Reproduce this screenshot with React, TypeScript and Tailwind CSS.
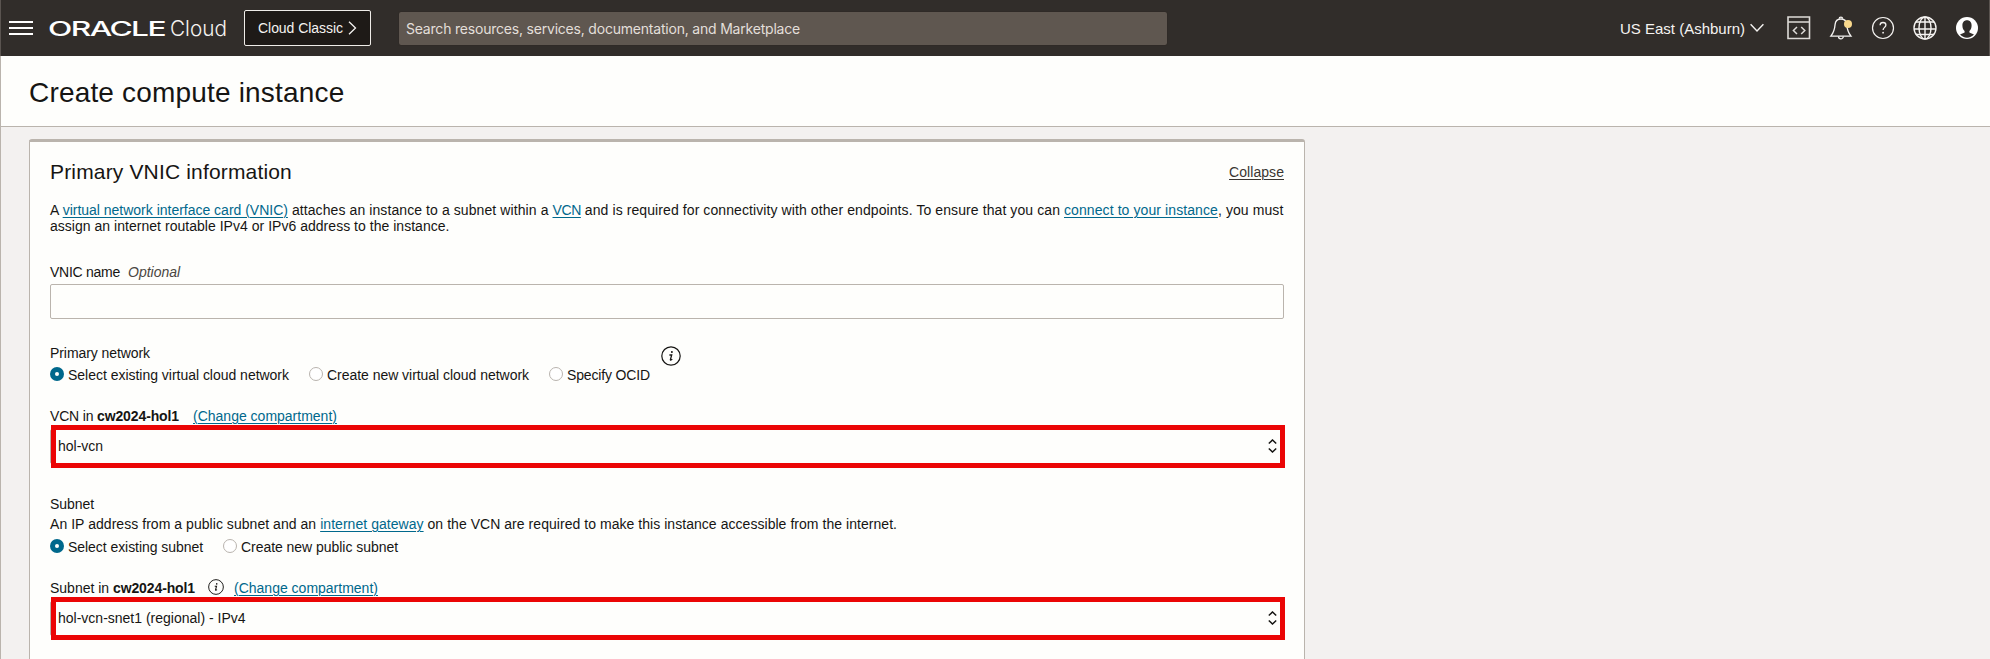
import type { ReactNode } from "react";

function CodeIcon() {
  return (
    <svg width="24" height="24" viewBox="0 0 24 24" fill="none" stroke="#dedbd8">
      <path d="M1 1h21.500v21.500H1zM1 6h21.500" strokeWidth="1.6" />
      <path d="M10 11l-3.600 3.500 3.600 3.500M14.200 11l3.600 3.500-3.600 3.500" strokeWidth="1.5" />
    </svg>
  );
}

function BellIcon() {
  return (
    <svg width="24" height="26" viewBox="0 0 24 26" fill="none" stroke="#f5f3f1" strokeWidth="1.3">
      <path d="M1.800 21.200h20.200c-3.200-4-3.900-6.600-4.300-11.800C17.400 5.600 15 4 11.900 4S6.400 5.600 6.100 9.400C5.700 14.600 5 17.200 1.800 21.200z" />
      <path d="M10.200 3.800a1.700 1.700 0 1 1 3.400 0M9.500 21.400a2.400 2.400 0 0 0 4.800 0" />
      <circle cx="19" cy="9" r="4" fill="#f9d88c" stroke="none" />
    </svg>
  );
}

function HelpIcon() {
  return (
    <svg width="24" height="24" viewBox="0 0 24 24" fill="none" stroke="#f5f3f1" strokeWidth="1.2">
      <circle cx="12" cy="12" r="10.5" />
      <path d="M9.100 9.300c0-1.700 1.200-2.800 2.900-2.800s2.900 1.100 2.900 2.600c0 2.300-2.800 2.300-2.800 5" strokeWidth="1.300" />
      <circle cx="12.100" cy="16.700" r=".9" fill="#f5f3f1" stroke="none" />
    </svg>
  );
}

function GlobeIcon() {
  return (
    <svg width="24" height="24" viewBox="0 0 24 24" fill="none" stroke="#f5f3f1" strokeWidth="1.4">
      <circle cx="12" cy="12" r="11" />
      <ellipse cx="12" cy="12" rx="6" ry="11" />
      <path d="M12 1v22M1 13h22M3 6h18M3 18.500h18" />
    </svg>
  );
}

function UserIcon() {
  return (
    <svg width="24" height="24" viewBox="0 0 24 24">
      <circle cx="12" cy="12" r="11" fill="#fff" />
      <path d="M12 4.300c3 0 4.600 2.200 4.600 5.200 0 2.300-.8 4.300-2.200 5.400v1.500c1.200.7 3.300 1 4.600 2.200-1.800 2-4.300 3.200-7 3.200s-5.200-1.200-7-3.200c1.300-1.200 3.400-1.500 4.600-2.200v-1.500C8.200 13.800 7.400 11.800 7.400 9.500c0-3 1.600-5.200 4.600-5.200z" fill="#312d2a" />
    </svg>
  );
}

function InfoIcon({ size }: { size: number }) {
  return (
    <svg width={size} height={size} viewBox="0 0 20 20" fill="none" stroke="#161513">
      <circle cx="10" cy="10" r="9.200" strokeWidth="1.200" />
      <circle cx="10.900" cy="6.100" r="1" fill="#161513" stroke="none" />
      <path d="M8.400 9h2.300l-1.300 4.600c-.1.700.6.600 1.900-.3" strokeWidth="1.300" />
    </svg>
  );
}

function Link({ children, className = "" }: { children: ReactNode; className?: string }) {
  return (
    <a href="#" className={`text-[#00688c] underline decoration-1 underline-offset-2 ${className}`}>
      {children}
    </a>
  );
}

function Radio({ checked = false, children }: { checked?: boolean; children: ReactNode }) {
  return (
    <label className="flex h-4 items-start gap-1">
      {checked ? (
        <span className="flex size-[14px] items-center justify-center rounded-full bg-[#00688c]">
          <span className="size-1 rounded-full bg-[#fefefc]" />
        </span>
      ) : (
        <span className="size-[14px] rounded-full border border-[#b9b4ae] bg-white" />
      )}
      <span>{children}</span>
    </label>
  );
}

function SelectBox({ value }: { value: string }) {
  return (
    <div className="relative mt-[5px] flex h-[35px] items-center justify-between rounded-xs border border-[#bab4ad] pr-[6px] pb-px pl-[7px]">
      <span>{value}</span>
      <svg width="9" height="14" viewBox="0 0 9 14" fill="none" stroke="#161513" strokeWidth="1.500">
        <path d="M.8 4.500L4.500 1l3.700 3.500M.8 9.500L4.500 13l3.700-3.500" />
      </svg>
      <div className="absolute -top-[5px] left-0 h-[43px] w-[1234px] border-[5px] border-[#eb0505]" />
    </div>
  );
}

export default function App() {
  return (
    <div className="flex h-[659px] w-[1990px] flex-col overflow-hidden bg-[#f3f1f0] font-['Liberation_Sans',Arial,sans-serif] text-[14px] leading-4 text-[#161513]">
      <header className="flex h-14 shrink-0 items-center border-x border-[#5a5450] bg-[#312d2a] text-[#f5f3f1]">
        <button className="ml-2 flex h-[14px] w-6 flex-col justify-between">
          <span className="h-[2px] w-full bg-white" />
          <span className="h-[2px] w-full bg-white" />
          <span className="h-[2px] w-full bg-white" />
        </button>
        <svg width="180" height="30" viewBox="0 0 180 30" className="ml-4">
          <text x="-1" y="22.500" textLength="117" lengthAdjust="spacingAndGlyphs" letterSpacing="-1" fontSize="20" fontWeight="500" fill="#fff" className="font-['Inter',sans-serif]">
            ORACLE
          </text>
          <text x="121" y="22.500" textLength="57" lengthAdjust="spacingAndGlyphs" fontSize="21.500" fontWeight="300" fill="#f5f3f1" className="font-['Inter',sans-serif]">
            Cloud
          </text>
        </svg>
        <button className="ml-[15px] flex h-9 w-[127px] items-center rounded-xs border border-[#efece8] bg-[#1e1a17] pl-[13px] tracking-[-0.046px] text-[#f5f3f1]">
          Cloud Classic
          <svg width="9" height="14" viewBox="0 0 9 14" fill="none" stroke="#f5f3f1" strokeWidth="1.300" className="ml-[5px]">
            <path d="M1 .7L7.500 7 1 13.300" />
          </svg>
        </button>
        <div className="ml-7 flex h-[33px] w-[768px] items-center rounded-xs bg-[#5f5750] pt-px pl-[7px] font-['Inter',sans-serif] tracking-[-0.204px] text-[#e3dfda] shadow-[0_0_1px_#1e1a17]">
          Search resources, services, documentation, and Marketplace
        </div>
        <div className="ml-auto flex items-center">
          <span className="pt-0.5 text-[15px]">US East (Ashburn)</span>
          <svg width="14" height="10" viewBox="0 0 14 10" fill="none" stroke="#f5f3f1" strokeWidth="1.400" className="ml-[5px]">
            <path d="M.6 1.200L7 8l6.400-6.800" />
          </svg>
        </div>
        <div className="mr-2.5 ml-[23px] flex items-center gap-[18px]">
          <CodeIcon />
          <BellIcon />
          <HelpIcon />
          <GlobeIcon />
          <UserIcon />
        </div>
      </header>

      <div className="flex grow flex-col border-l border-[#bab4ad]">
        <div className="flex h-[71px] shrink-0 items-center border-b border-[#bab4ad] bg-[#fefefc] pl-[28px]">
          <h1 className="pt-1 text-[28px] leading-8 tracking-[0.18px]">Create compute instance</h1>
        </div>

        <section className="mt-3 ml-7 w-[1276px] grow rounded-t-[3px] border-x border-t-[3px] border-[#bab4ad] bg-[#fefefc] px-5 pt-[18px]">
          <div className="flex items-start justify-between">
            <h2 className="text-[21px] leading-6 tracking-[0.16px]">Primary VNIC information</h2>
            <a href="#" className="mt-1 tracking-[0.06px] text-[#3a3632] underline decoration-1 underline-offset-2">
              Collapse
            </a>
          </div>

          <p className="mt-[18px] whitespace-nowrap">
            <span className="tracking-[0.09px]">
              A <Link className="tracking-[-0.01px]">virtual network interface card (VNIC)</Link> attaches an instance to a subnet within a <Link className="tracking-[-0.4px]">VCN</Link> and is required for connectivity with other endpoints. To ensure that you can <Link>connect to your instance</Link>, you must
            </span>
            <br />
            <span className="tracking-[0.028px]">assign an internet routable IPv4 or IPv6 address to the instance.</span>
          </p>

          <div className="mt-[30px] flex gap-2">
            <span className="tracking-[-0.26px]">VNIC name</span>
            <span className="text-[#4a4642] italic">Optional</span>
          </div>
          <input className="mt-1 block h-[35px] w-full rounded-xs border border-[#bab4ad] bg-[#fefefc] px-2" />

          <div className="mt-[26px] flex items-start">
            <div>
              <div className="tracking-[-0.076px]">Primary network</div>
              <div className="mt-1.5 flex">
                <div className="w-[259px] tracking-[-0.021px]">
                  <Radio checked>Select existing virtual cloud network</Radio>
                </div>
                <div className="w-[240px] tracking-[-0.035px]">
                  <Radio>Create new virtual cloud network</Radio>
                </div>
                <div className="w-[112px] tracking-[-0.151px]">
                  <Radio>Specify OCID</Radio>
                </div>
              </div>
            </div>
            <span className="mt-px">
              <InfoIcon size={20} />
            </span>
          </div>

          <div className="mt-[25px] flex h-4">
            <span className="w-[47px] tracking-[-0.176px]">VCN in</span>
            <b className="w-[96px] tracking-[-0.115px]">cw2024-hol1</b>
            <Link>(Change compartment)</Link>
          </div>
          <SelectBox value="hol-vcn" />

          <div className="mt-8 tracking-[-0.063px]">Subnet</div>
          <p className="mt-1 tracking-[0.045px]">
            An IP address from a public subnet and an <Link>internet gateway</Link> on the VCN are required to make this instance accessible from the internet.
          </p>
          <div className="mt-[7px] flex">
            <div className="w-[173px] tracking-[-0.055px]">
              <Radio checked>Select existing subnet</Radio>
            </div>
            <div className="tracking-[-0.042px]">
              <Radio>Create new public subnet</Radio>
            </div>
          </div>

          <div className="mt-[25px] flex h-4">
            <span className="w-[63px]">Subnet in</span>
            <b className="w-[95px] tracking-[-0.115px]">cw2024-hol1</b>
            <span className="-mt-px w-[26px]">
              <InfoIcon size={16} />
            </span>
            <Link>(Change compartment)</Link>
          </div>
          <SelectBox value="hol-vcn-snet1 (regional) - IPv4" />
        </section>
      </div>
    </div>
  );
}
